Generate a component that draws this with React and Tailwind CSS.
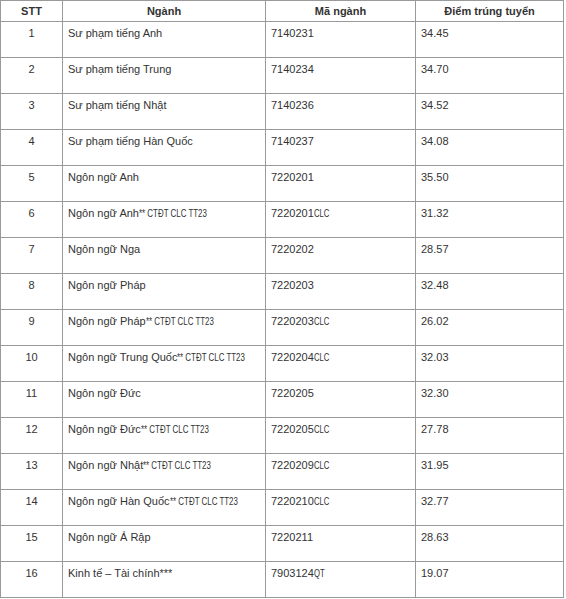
const rows = [
  ['1', 'Sư phạm tiếng Anh', '7140231', '34.45'],
  ['2', 'Sư phạm tiếng Trung', '7140234', '34.70'],
  ['3', 'Sư phạm tiếng Nhật', '7140236', '34.52'],
  ['4', 'Sư phạm tiếng Hàn Quốc', '7140237', '34.08'],
  ['5', 'Ngôn ngữ Anh', '7220201', '35.50'],
  ['6', 'Ngôn ngữ Anh', '7220201', '31.32', true, 'CLC'],
  ['7', 'Ngôn ngữ Nga', '7220202', '28.57'],
  ['8', 'Ngôn ngữ Pháp', '7220203', '32.48'],
  ['9', 'Ngôn ngữ Pháp', '7220203', '26.02', true, 'CLC'],
  ['10', 'Ngôn ngữ Trung Quốc', '7220204', '32.03', true, 'CLC'],
  ['11', 'Ngôn ngữ Đức', '7220205', '32.30'],
  ['12', 'Ngôn ngữ Đức', '7220205', '27.78', true, 'CLC'],
  ['13', 'Ngôn ngữ Nhật', '7220209', '31.95', true, 'CLC'],
  ['14', 'Ngôn ngữ Hàn Quốc', '7220210', '32.77', true, 'CLC'],
  ['15', 'Ngôn ngữ Ả Rập', '7220211', '28.63'],
  ['16', 'Kinh tế – Tài chính***', '7903124', '19.07', false, 'QT'],
];

export default function App() {
  return (
    <div className="bg-white font-['Liberation_Sans',Arial,sans-serif] text-[11px] leading-[13px] text-[#333]">
      <table className="w-[563px] table-fixed border-collapse">
        <colgroup>
          <col className="w-[62px]" />
          <col className="w-[203px]" />
          <col className="w-[150px]" />
          <col className="w-[148px]" />
        </colgroup>
        <thead>
          <tr className="h-[21px]">
            <th className="border border-[#9a9a9a] px-1 text-center font-bold">STT</th>
            <th className="border border-[#9a9a9a] px-1 text-center font-bold">Ngành</th>
            <th className="border border-[#9a9a9a] px-1 text-center font-bold">Mã ngành</th>
            <th className="border border-[#9a9a9a] px-1 text-center font-bold">Điểm trúng tuyển</th>
          </tr>
        </thead>
        <tbody>
          {rows.map((r) => (
            <tr key={r[0]} className="h-[36px]">
              <td className="border border-[#9a9a9a] px-1 pt-[5px] align-top text-center">{r[0]}</td>
              <td className="border border-[#9a9a9a] px-[5px] pt-[5px] align-top whitespace-nowrap">
                {r[1]}
                {r[4] && (
                  <span className="inline-block origin-left scale-x-[0.72]">** CTĐT CLC TT23</span>
                )}
              </td>
              <td className="border border-[#9a9a9a] px-[5px] pt-[5px] align-top whitespace-nowrap">
                {r[2]}
                {r[5] && <span className="inline-block origin-left scale-x-[0.7]">{r[5]}</span>}
              </td>
              <td className="border border-[#9a9a9a] px-[5px] pt-[5px] align-top">{r[3]}</td>
            </tr>
          ))}
        </tbody>
      </table>
    </div>
  );
}
